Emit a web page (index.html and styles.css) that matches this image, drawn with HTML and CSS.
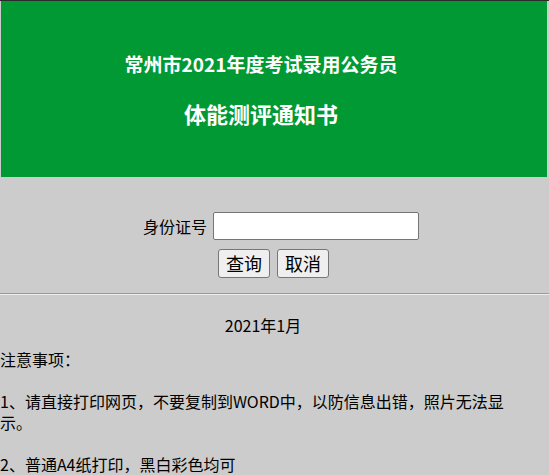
FILE: index.html
```html
<!DOCTYPE html>
<html lang="zh-CN">
<head>
<meta charset="utf-8">
<title>体能测评通知书</title>
<link rel="stylesheet" href="styles.css">
</head>
<body>
<div class="topline"></div>
<div class="header">
  <div class="title1">常州市2021年度考试录用公务员</div>
  <div class="title2">体能测评通知书</div>
</div>
<div class="form">
  <div class="row">
    <label class="label">身份证号</label>
    <input class="input" type="text">
  </div>
  <div class="btns">
    <button class="btn">查询</button>
    <button class="btn">取消</button>
  </div>
</div>
<hr class="rule">
<div class="date">2021年1月</div>
<div class="content">注意事项：<br><br>1、请直接打印网页，不要复制到WORD中，以防信息出错，照片无法显示。<br><br>2、普通A4纸打印，黑白彩色均可</div>
</body>
</html>
```
FILE: styles.css
```css
html, body {
  margin: 0;
  padding: 0;
}
body {
  background: #cccccc;
  font-family: "Microsoft YaHei", "Noto Sans CJK SC", "Noto Sans", sans-serif;
  font-size: 16px;
  color: #000;
  width: 549px;
  height: 475px;
  overflow: hidden;
}
.topline {
  height: 1px;
  background: #2b2b2b;
}
.header {
  margin-left: 1px;
  width: 520px;
  padding-right: 26px;
  height: 176px;
  background: #009933;
  color: #fff;
  font-weight: bold;
  text-align: center;
  box-sizing: content-box;
}
.title1 {
  padding-top: 50px;
  font-size: 19px;
  line-height: 26px;
}
.title2 {
  margin-top: 22px;
  font-size: 22px;
  line-height: 28px;
}
.form {
  padding-top: 35px;
}
.row {
  display: flex;
  align-items: center;
  gap: 6px;
  padding-left: 143px;
  height: 28px;
}
.label {
  font-size: 16px;
  line-height: 28px;
}
.input {
  width: 206px;
  height: 28px;
  box-sizing: border-box;
  border: 1px solid #767676;
  border-radius: 2px;
  background: #fff;
  margin: 0;
  padding: 0 4px;
}
.btns {
  display: flex;
  gap: 7px;
  padding-left: 218px;
  margin-top: 9px;
}
.btn {
  width: 52px;
  height: 29px;
  box-sizing: border-box;
  border: 1px solid #767676;
  border-radius: 3px;
  background: #efefef;
  font-family: "Microsoft YaHei", "Noto Sans CJK SC", sans-serif;
  font-size: 18px;
  line-height: 25px;
  padding: 0;
  margin: 0;
  color: #000;
}
.rule {
  margin: 15px 0 0 0;
  border: 0;
  border-top: 1px solid #9a9a9a;
  border-bottom: 1px solid #eeeeee;
  height: 0;
}
.date {
  width: 526px;
  text-align: center;
  margin-top: 20px;
  line-height: 21px;
}
.content {
  width: 510px;
  margin-top: 13px;
  line-height: 21px;
}
```
